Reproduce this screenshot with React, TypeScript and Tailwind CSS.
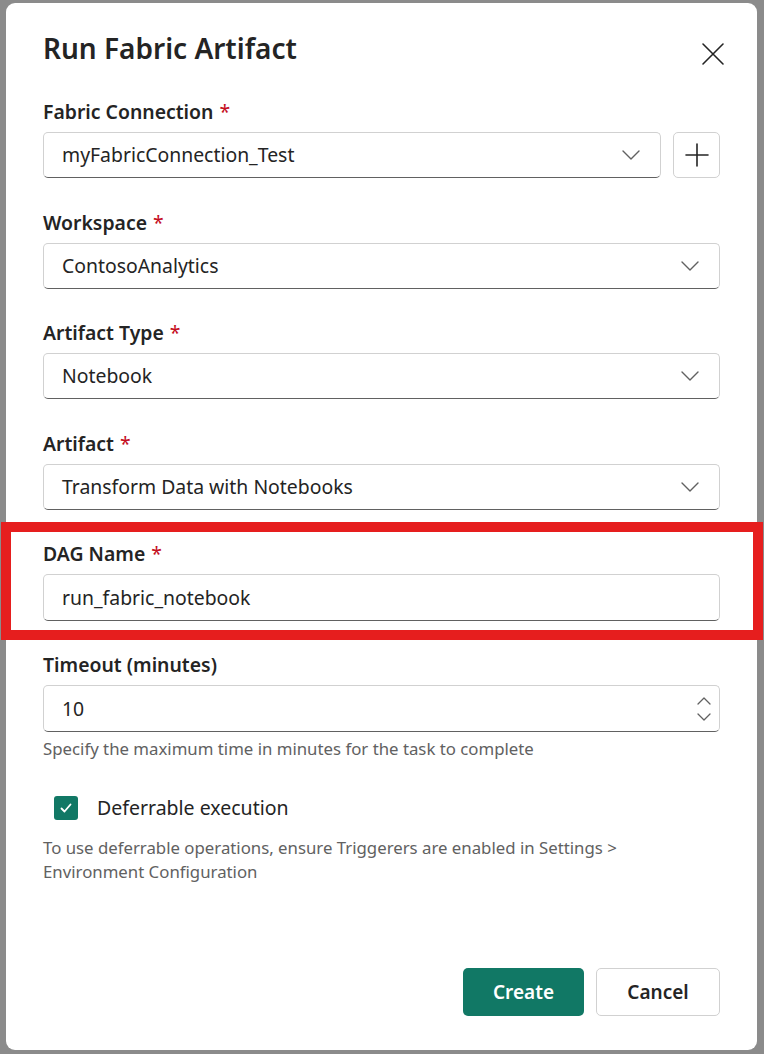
import React from 'react';

const font = { fontFamily: '"Noto Sans", "Open Sans", Arial, sans-serif' };

const Chevron: React.FC = () => (
    <svg width="20" height="12" viewBox="0 0 20 12" fill="none" stroke="#616161" strokeWidth={1.4} strokeLinecap="round" strokeLinejoin="round">
        <path d="M2 2l8 8 8-8" />
    </svg>
);

const Label: React.FC<{ text: string; required?: boolean }> = ({ text, required }) => (
    <div className="h-[28px] leading-[28px] text-[19.4px] font-semibold text-[#242424]">
        {text}
        {required && <span className="ml-[6px] font-normal text-[#c50f1f]">*</span>}
    </div>
);

const Select: React.FC<{ value: string }> = ({ value }) => (
    <div className="flex h-[46px] flex-1 items-center justify-between rounded-[5px] border border-[#d1d1d1] border-b-[#616161] pl-[18px] pr-[19px]">
        <span className="text-[19.4px] text-[#242424]">{value}</span>
        <Chevron />
    </div>
);

const Field: React.FC<{ label: string; required?: boolean; children: React.ReactNode; className?: string }> = ({ label, required, children, className }) => (
    <div className={className}>
        <Label text={label} required={required} />
        <div className="mt-[6px] flex gap-[12px]">{children}</div>
    </div>
);

export default function App() {
    return (
        <div className="relative h-[1054px] w-[764px] overflow-hidden bg-[#8b8b8b] pt-[3px]" style={font}>
            <div className="ml-[6px] flex h-[1047px] w-[751px] flex-col rounded-[9px] bg-white px-[37px] pb-[34px] pt-[27px]">
                <div className="flex items-start justify-between">
                    <h1 className="text-[28px] font-semibold leading-[36px] text-[#242424]">Run Fabric Artifact</h1>
                    <svg className="mr-[-6px] mt-[11px]" width="26" height="26" viewBox="0 0 26 26" fill="none" stroke="#242424" strokeWidth={1.6} strokeLinecap="round">
                        <path d="M3 3l20 20M23 3L3 23" />
                    </svg>
                </div>

                <Field label="Fabric Connection" required className="mt-[31px]">
                    <Select value="myFabricConnection_Test" />
                    <div className="flex h-[46px] w-[47px] items-center justify-center rounded-[5px] border border-[#d1d1d1]">
                        <svg width="26" height="26" viewBox="0 0 26 26" fill="none" stroke="#242424" strokeWidth={1.6} strokeLinecap="round">
                            <path d="M13 2v22M2 13h22" />
                        </svg>
                    </div>
                </Field>

                <Field label="Workspace" required className="mt-[30.5px]">
                    <Select value="ContosoAnalytics" />
                </Field>

                <Field label="Artifact Type" required className="mt-[30.5px]">
                    <Select value="Notebook" />
                </Field>

                <Field label="Artifact" required className="mt-[30.5px]">
                    <Select value="Transform Data with Notebooks" />
                </Field>

                <Field label="DAG Name" required className="mt-[30.5px]">
                    <div className="flex h-[47px] flex-1 items-center rounded-[5px] border border-[#d1d1d1] border-b-[#616161] pl-[18px]">
                        <span className="text-[19.4px] text-[#242424]">run_fabric_notebook</span>
                    </div>
                </Field>

                <Field label="Timeout (minutes)" className="mt-[30px]">
                    <div className="flex h-[47px] flex-1 items-center justify-between rounded-[5px] border border-[#d1d1d1] border-b-[#616161] pl-[18px] pr-[8px]">
                        <span className="text-[19.4px] text-[#242424]">10</span>
                        <div className="flex flex-col gap-[8px]">
                            <svg width="14" height="8" viewBox="0 0 14 8" fill="none" stroke="#616161" strokeWidth={1.3} strokeLinecap="round" strokeLinejoin="round">
                                <path d="M1 7l6-6 6 6" />
                            </svg>
                            <svg width="14" height="8" viewBox="0 0 14 8" fill="none" stroke="#616161" strokeWidth={1.3} strokeLinecap="round" strokeLinejoin="round">
                                <path d="M1 1l6 6 6-6" />
                            </svg>
                        </div>
                    </div>
                </Field>
                <p className="mt-[7px] text-[16.8px] leading-[20px] text-[#616161]">Specify the maximum time in minutes for the task to complete</p>

                <div className="ml-[11px] mt-[31px] flex h-[36px] items-center gap-[19px]">
                    <div className="flex h-[24px] w-[24px] items-center justify-center rounded-[3px] bg-[#117865]">
                        <svg width="14" height="14" viewBox="0 0 14 14" fill="none" stroke="#fff" strokeWidth={1.8} strokeLinecap="round" strokeLinejoin="round">
                            <path d="M2.5 7.5l3 3 6-7" />
                        </svg>
                    </div>
                    <span className="text-[19.5px] text-[#242424]">Deferrable execution</span>
                </div>
                <p className="mt-[10px] text-[16.8px] leading-[24px] text-[#616161]">
                    To use deferrable operations, ensure Triggerers are enabled in Settings &gt;
                    <br />
                    Environment Configuration
                </p>

                <div className="mt-auto flex justify-end gap-[12px]">
                    <button className="h-[48px] w-[121px] rounded-[5px] bg-[#117865] text-[19px] font-semibold text-white">Create</button>
                    <button className="h-[48px] w-[124px] rounded-[5px] border border-[#d1d1d1] bg-white text-[19px] font-semibold text-[#242424]">Cancel</button>
                </div>
            </div>

            {/* annotation highlight over the DAG Name field */}
            <div className="pointer-events-none absolute left-[1px] top-[522px] h-[118px] w-[762px] border-[10px] border-[#e61e1e]" />
        </div>
    );
}
